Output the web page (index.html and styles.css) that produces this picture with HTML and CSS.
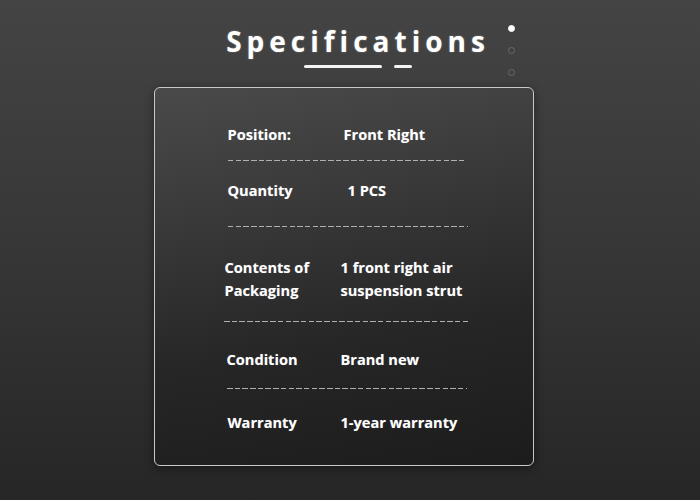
FILE: index.html
```html
<!DOCTYPE html>
<html>
<head>
<meta charset="utf-8">
<link rel="stylesheet" href="styles.css">
</head>
<body>
<div class="page">
  <header class="head">
    <h1 class="title">Specifications</h1>
    <div class="bars"><span class="bar long"></span><span class="bar short"></span></div>
    <div class="dots"><span class="dot on"></span><span class="dot"></span><span class="dot"></span></div>
  </header>
  <section class="card">
    <div class="row r1"><span class="label">Position:</span><span class="value">Front Right</span></div>
    <div class="dash d1"></div>
    <div class="row r2"><span class="label">Quantity</span><span class="value v2">1 PCS</span></div>
    <div class="dash d2"></div>
    <div class="row r3"><span class="label">Contents of<br>Packaging</span><span class="value">1 front right air<br>suspension strut</span></div>
    <div class="dash d3"></div>
    <div class="row r4"><span class="label">Condition</span><span class="value">Brand new</span></div>
    <div class="dash d4"></div>
    <div class="row r5"><span class="label">Warranty</span><span class="value">1-year warranty</span></div>
  </section>
</div>
</body>
</html>
```

FILE: styles.css
```css
* { box-sizing: border-box; margin: 0; padding: 0; }
html, body { width: 700px; height: 500px; overflow: hidden; }
body {
  background: linear-gradient(180deg, #444444 0%, #383838 45%, #262626 100%);
  font-family: "Open Sans", "Noto Sans", sans-serif;
  color: #ffffff;
}
.page { position: relative; width: 700px; height: 500px; display: flex; flex-direction: column; align-items: center; }
.head { position: relative; width: 700px; height: 87px; display: flex; flex-direction: column; align-items: center; }
.title {
  margin-top: 22px;
  margin-left: 16px;
  font-size: 28px;
  font-weight: 700;
  letter-spacing: 5px;
  line-height: 38px;
  color: #ffffff;
  text-shadow: 0 0 2px rgba(255,255,255,0.35);
}
.bars { display: flex; gap: 12px; margin-top: 5px; margin-left: 16px; }
.bar { display: block; height: 3px; border-radius: 2px; background: #f4f4f4; }
.bar.long { width: 78px; }
.bar.short { width: 18px; }
.dots { position: absolute; left: 508px; top: 24.5px; display: flex; flex-direction: column; align-items: center; gap: 15px; }
.dot { width: 7px; height: 7px; border-radius: 50%; border: 1px solid #6a6a6a; }
.dot.on { background: #ffffff; border-color: #ffffff; }
.card {
  width: 380px;
  height: 379px;
  margin-right: 13px;
  border: 1.5px solid #c8c8c8;
  border-radius: 6px;
  background: linear-gradient(170deg, #4a4a4a 0%, #3a3a3a 30%, #262626 65%, #1c1c1c 100%);
  box-shadow: 0 2px 10px rgba(0,0,0,0.45);
  display: flex;
  flex-direction: column;
  padding-top: 35px;
}
.row { display: flex; font-size: 14.6px; font-weight: 700; line-height: 23px; text-shadow: 0 0 1px rgba(255,255,255,0.3); }
.label { width: 116px; }
.r1 { margin-left: 73px; }
.r2 { margin-left: 73px; margin-top: 17.5px; }
.v2 { padding-left: 4px; }
.r3 { margin-left: 70px; margin-top: 28.5px; }
.r3 .label { width: 116px; }
.r4 { margin-left: 72px; margin-top: 25.5px; }
.r4 .label { width: 114px; }
.r5 { margin-left: 73px; margin-top: 21.5px; }
.r5 .label { width: 113px; }
.dash {
  height: 1px;
  background: repeating-linear-gradient(90deg, #b0b0b0 0 5.5px, transparent 5.5px 7.7px);
}
.d1 { margin: 14px 0 0 73px; width: 239px; }
.d2 { margin: 24.5px 0 0 73px; width: 240px; }
.d3 { margin: 19.5px 0 0 69px; width: 246px; }
.d4 { margin: 17.5px 0 0 72px; width: 240px; }
```
